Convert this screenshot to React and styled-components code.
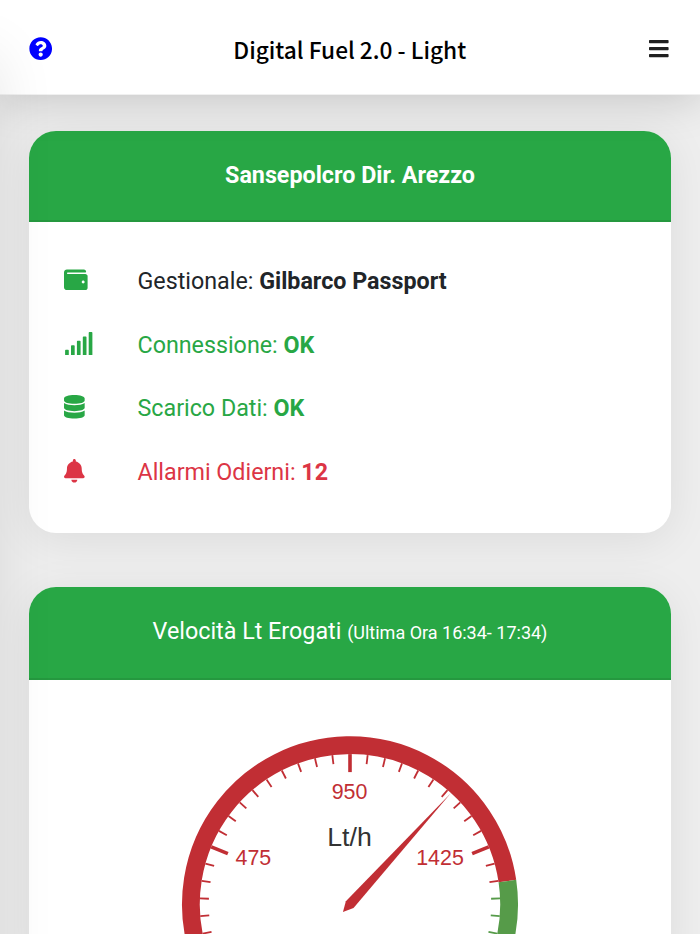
import React from "react";
import styled, { createGlobalStyle } from "styled-components";
import { FaQuestionCircle, FaBars, FaWallet, FaSignal, FaDatabase, FaBell } from "react-icons/fa";

const GREEN = "#28a745";
const RED = "#dc3545";
const GAUGE_RED = "#c12e34";
const GAUGE_GREEN = "#569b49";

const GlobalStyle = createGlobalStyle`
  * { box-sizing: border-box; }
  html, body { margin: 0; padding: 0; overflow: hidden; }
  body { background: #eee; font-family: Roboto, sans-serif; color: #212529; }
`;

const Page = styled.div`
  height: 934px;
  overflow: hidden;
  background: #eee;
`;

const TopBar = styled.header`
  position: relative;
  height: 95px;
  padding: 4px 31px 0 28.5px;
  display: grid;
  grid-template-columns: 60px 1fr 60px;
  align-items: center;
  background: #fff;
  border-bottom: 1px solid #f0f0f0;
  box-shadow: 0 4px 44px rgba(0, 0, 0, 0.18);
`;

const HelpButton = styled.a`
  color: #00f;
  justify-self: start;
  svg { display: block; width: 23.4px; height: 23.4px; }
`;

const MenuButton = styled.a`
  color: #1f1f1f;
  justify-self: end;
  svg { display: block; width: 19.6px; height: 23.4px; }
`;

const Title = styled.h1`
  margin: 0;
  padding-top: 2px;
  text-align: center;
  text-indent: 2px;
  font: 500 22.7px/36px "Noto Sans CJK JP", sans-serif;
  color: #000;
`;

const SidePanel = styled.aside`
  position: fixed;
  z-index: 5;
  left: -460px;
  top: 54px;
  bottom: -60px;
  width: 460px;
  box-shadow: 0 0 54px rgba(0, 0, 0, 0.09);
`;

const Content = styled.main`
  padding: 36px 29px 0;
  display: flex;
  flex-direction: column;
  gap: 54px;
`;

const Card = styled.section`
  border-radius: 27px;
  background: #fff;
  box-shadow: 0 7px 44px rgba(0, 0, 0, 0.08);
`;

const CardHeader = styled.div`
  height: ${(p) => p.$height}px;
  padding-top: ${(p) => (p.$bold ? 20 : 19.5)}px;
  display: flex;
  align-items: baseline;
  justify-content: center;
  border-radius: 27px 27px 0 0;
  border-bottom: 2px solid #25983f;
  background: ${GREEN};
  color: #fff;
  font-size: 23.3px;
  line-height: 48px;
  font-weight: ${(p) => (p.$bold ? 700 : 400)};
  white-space: pre;
  small { font-size: 18px; }
`;

const StatusList = styled.ul`
  list-style: none;
  margin: 0;
  height: 311px;
  padding: 27px 35px 0;
`;

const StatusRow = styled.li`
  height: 63.8px;
  display: grid;
  grid-template-columns: 73.5px 1fr;
  align-items: center;
  color: ${(p) => p.$color};
  font-size: 23.27px;
  b { font-weight: 700; }
`;

const IconBox = styled.span`
  margin-top: -2.5px;
  color: ${(p) => p.$color || "inherit"};
  svg { display: block; height: 23.6px; width: ${(p) => p.$width}px; }
`;

const GaugeSvg = styled.svg`
  display: block;
  width: 642px;
  height: 300px;
  font-family: "Liberation Sans", sans-serif;
`;

const rows = [
  { icon: FaWallet, width: 23.6, label: "Gestionale", value: "Gilbarco Passport", color: "#212529", iconColor: GREEN },
  { icon: FaSignal, width: 29.5, label: "Connessione", value: "OK", color: GREEN },
  { icon: FaDatabase, width: 20.7, label: "Scarico Dati", value: "OK", color: GREEN },
  { icon: FaBell, width: 20.7, label: "Allarmi Odierni", value: "12", color: RED },
];

const CX = 321;
const CY = 224.3;
const R = 168;
const BAND = 17.8;

const polar = (r, deg) => {
  const a = (deg * Math.PI) / 180;
  return [CX + r * Math.cos(a), CY - r * Math.sin(a)];
};

const arc = (from, to) => {
  const r = R - BAND / 2;
  const large = from - to > 180 ? 1 : 0;
  return `M${polar(r, from)} A${r} ${r} 0 ${large} 1 ${polar(r, to)}`;
};

function Gauge() {
  const ticks = Array.from({ length: 41 }, (_, i) => {
    const angle = 225 - i * 6.75;
    const major = i % 10 === 0;
    const [x1, y1] = polar(R - BAND, angle);
    const [x2, y2] = polar(R - BAND - (major ? 18 : 9), angle);
    return (
      <line key={i} x1={x1} y1={y1} x2={x2} y2={y2}
        stroke={i > 32 ? GAUGE_GREEN : GAUGE_RED} strokeWidth={major ? 3.6 : 1.8} />
    );
  });
  const tip = 47.8;
  const pointer = [polar(-10.5, tip), polar(5.2, tip + 95), polar(150, tip), polar(5.2, tip - 95)];
  return (
    <GaugeSvg viewBox="0 0 642 300">
      <path d={arc(225, 8.4)} fill="none" stroke={GAUGE_RED} strokeWidth={BAND} />
      <path d={arc(8.4, -45)} fill="none" stroke={GAUGE_GREEN} strokeWidth={BAND} />
      {ticks}
      <g fill={GAUGE_RED} fontSize="21.4">
        <text x="206.5" y="185">475</text>
        <text x="320.5" y="119.3" textAnchor="middle">950</text>
        <text x="434.8" y="185" textAnchor="end">1425</text>
      </g>
      <text x="320.5" y="166.2" fontSize="26.7" fill="#333" textAnchor="middle">Lt/h</text>
      <polygon points={pointer.join(" ")} fill={GAUGE_RED} />
    </GaugeSvg>
  );
}

export default function App() {
  return (
    <Page>
      <GlobalStyle />
      <TopBar>
        <HelpButton><FaQuestionCircle /></HelpButton>
        <Title>Digital Fuel 2.0 - Light</Title>
        <MenuButton><FaBars /></MenuButton>
      </TopBar>
      <SidePanel />
      <Content>
        <Card>
          <CardHeader $height={91} $bold>Sansepolcro Dir. Arezzo</CardHeader>
          <StatusList>
            {rows.map(({ icon: Icon, width, label, value, color, iconColor }) => (
              <StatusRow key={label} $color={color}>
                <IconBox $width={width} $color={iconColor}><Icon /></IconBox>
                <span>{label}: <b>{value}</b></span>
              </StatusRow>
            ))}
          </StatusList>
        </Card>
        <Card>
          <CardHeader $height={93}><span>Velocità Lt Erogati </span><small>(Ultima Ora 16:34- 17:34)</small></CardHeader>
          <Gauge />
        </Card>
      </Content>
    </Page>
  );
}
